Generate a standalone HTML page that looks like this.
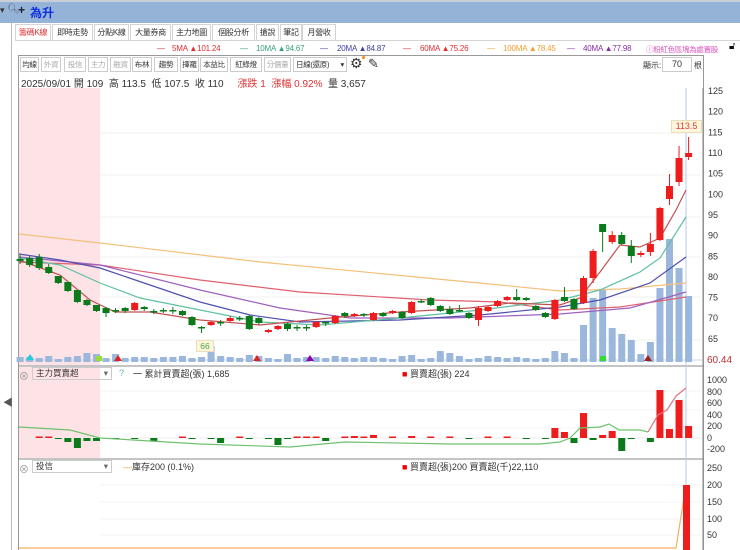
<!DOCTYPE html>
<html><head><meta charset="utf-8">
<style>
*{box-sizing:border-box;margin:0;padding:0}
body{width:740px;height:550px;overflow:hidden;background:#fff;font-family:"Liberation Sans","Noto Sans CJK TC",sans-serif;font-size:9px;color:#333;position:relative}
.a{position:absolute;white-space:nowrap}
.top{left:0;top:0;width:740px;height:23px;background:#95b3d7;border-top:2px solid #c9cfd8}
.tab{position:absolute;top:24px;height:17px;border:1px solid #d4d4d4;border-bottom:none;background:#fff;font-size:8px;line-height:15px;text-align:center;color:#333;white-space:nowrap;overflow:hidden;letter-spacing:-0.3px}
.btn{position:absolute;top:57px;height:15px;border:1px solid #ccc;background:#fff;font-size:7.5px;line-height:13px;text-align:center;color:#333;white-space:nowrap;overflow:hidden;letter-spacing:-0.3px}
.dis{color:#aaa}
.ma{position:absolute;top:44px;font-size:8px;white-space:nowrap;letter-spacing:-0.2px}
</style></head><body>
<div class="a top"></div>
<div class="a" style="left:0;top:5px;font-size:9px;color:#333">▾</div>
<div class="a" style="left:7px;top:4px;font-size:10px;color:#567">🔍︎</div>
<div class="a" style="left:18px;top:3px;font-size:12px;font-weight:bold;color:#223">+</div>
<div class="a" style="left:30px;top:4px;font-size:12px;font-weight:bold;color:#1030e0">為升</div>
<div class="a" style="left:11px;top:23px;width:1px;height:527px;background:#bbb"></div>
<div class="a" style="left:3px;top:394px;font-size:10px;color:#555">◀</div>

<div class="tab" style="left:15px;width:36px;color:#e03030">籌碼K線</div>
<div class="tab" style="left:52px;width:41px">即時走勢</div>
<div class="tab" style="left:94px;width:35px">分點K線</div>
<div class="tab" style="left:130px;width:41px">大量券商</div>
<div class="tab" style="left:172px;width:39px">主力地圖</div>
<div class="tab" style="left:212px;width:43px">個股分析</div>
<div class="tab" style="left:256px;width:23px">搶說</div>
<div class="tab" style="left:280px;width:22px">筆記</div>
<div class="tab" style="left:302px;width:34px">月營收</div>
<div class="a" style="left:15px;top:40px;width:725px;height:1px;background:#d4d4d4"></div>

<div class="ma" style="left:157px;color:#c03030">—</div><div class="ma" style="left:172px;color:#e03030">5MA ▲101.24</div>
<div class="ma" style="left:240px;color:#3aa080">—</div><div class="ma" style="left:256px;color:#3aa080">10MA ▲94.67</div>
<div class="ma" style="left:320px;color:#4040a0">—</div><div class="ma" style="left:337px;color:#4040a0">20MA ▲84.87</div>
<div class="ma" style="left:403px;color:#e03030">—</div><div class="ma" style="left:420px;color:#e03030">60MA ▲75.26</div>
<div class="ma" style="left:487px;color:#f0a030">—</div><div class="ma" style="left:503px;color:#f0a030">100MA ▲78.45</div>
<div class="ma" style="left:567px;color:#8030a0">—</div><div class="ma" style="left:583px;color:#8030a0">40MA ▲77.98</div>
<div class="a" style="left:646px;top:44px;font-size:7.5px;color:#e050c0;letter-spacing:-0.3px">ⓘ粉紅色區塊為處置股</div>
<div class="a" style="left:729px;top:41px;font-size:10px;color:#111">🔓︎</div>

<div class="a" style="left:18px;top:55px;width:686px;height:495px;border:1px solid #999;border-bottom:none"></div>

<div class="btn" style="left:20px;width:19px">均線</div>
<div class="btn dis" style="left:41px;width:20px">外資</div>
<div class="btn dis" style="left:64px;width:22px">投信</div>
<div class="btn dis" style="left:88px;width:20px">主力</div>
<div class="btn dis" style="left:110px;width:21px">融資</div>
<div class="btn" style="left:132px;width:20px">布林</div>
<div class="btn" style="left:154px;width:24px">趨勢</div>
<div class="btn" style="left:180px;width:19px">擇羅</div>
<div class="btn" style="left:200px;width:28px">本益比</div>
<div class="btn" style="left:230px;width:32px">紅綠燈</div>
<div class="btn dis" style="left:264px;width:27px">分價量</div>
<div class="btn" style="left:293px;width:54px;text-align:left;padding-left:2px">日線(還原)<span style="position:absolute;right:2px">▾</span></div>
<div class="a" style="left:350px;top:55px;font-size:14px;color:#333">⚙</div>
<div class="a" style="left:362px;top:56px;width:3px;height:3px;border-radius:2px;background:#f80"></div>
<div class="a" style="left:368px;top:56px;font-size:13px;color:#333">✎</div>
<div class="a" style="left:643px;top:60px;font-size:8px">顯示:</div>
<div class="a" style="left:662px;top:57px;width:30px;height:15px;border:1px solid #ccc;font-size:9px;line-height:13px;text-align:center">70</div>
<div class="a" style="left:694px;top:60px;font-size:8px">根</div>

<svg class="a" style="left:0;top:0" width="740" height="550" id="s"></svg>

<div class="a" style="left:21px;top:75px;font-size:10px;color:#333">2025/09/01 開 109 &nbsp;高 113.5 &nbsp;低 107.5 &nbsp;收 110 &nbsp;&nbsp;&nbsp;&nbsp;<span style="color:#e03030">漲跌 1 &nbsp;漲幅 0.92%</span> &nbsp;量 3,657</div>

<div class="a" style="left:671px;top:120px;width:31px;height:13px;background:#fdf6dc;border:1px solid #eadfb8;color:#e04040;font-size:9px;text-align:center;line-height:11px">113.5</div>
<div class="a" style="left:196px;top:340px;width:18px;height:12px;background:#fdf6dc;border:1px solid #eadfb8;color:#4a4;font-size:8.5px;text-align:center;line-height:10px">66</div>
<div class="a" style="left:707px;top:355px;font-size:10px;color:#c03030">60.44</div>

<div class="a" style="left:19px;top:368px;font-size:10px;color:#999">⊗</div>
<div class="a" style="left:32px;top:367px;width:80px;height:13px;border:1px solid #ccc;font-size:8.5px;line-height:11px;padding-left:3px">主力買賣超<span style="position:absolute;right:3px;color:#666">▾</span></div>
<div class="a" style="left:119px;top:368px;font-size:9px;color:#6ab">?</div>
<div class="a" style="left:133px;top:367px;font-size:9px;color:#333">一 累計買賣超(張) 1,685</div>
<div class="a" style="left:402px;top:367px;font-size:9px;color:#333"><span style="color:#e00">■</span> 買賣超(張) 224</div>

<div class="a" style="left:19px;top:461px;font-size:10px;color:#999">⊗</div>
<div class="a" style="left:32px;top:460px;width:80px;height:13px;border:1px solid #ccc;font-size:8.5px;line-height:11px;padding-left:3px">投信<span style="position:absolute;right:3px;color:#666">▾</span></div>
<div class="a" style="left:123px;top:460px;font-size:9px;color:#333"><span style="color:#f0a030">—</span>庫存200 (0.1%)</div>
<div class="a" style="left:402px;top:460px;font-size:9px;color:#333"><span style="color:#e00">■</span> 買賣超(張)200 買賣超(千)22,110</div>

<script>
var s=document.getElementById('s'),h='';
function r(x,y,w,hh,c){h+='<rect x="'+x+'" y="'+y+'" width="'+w+'" height="'+hh+'" fill="'+c+'"/>';}
function l(x1,y1,x2,y2,c,w){h+='<line x1="'+x1+'" y1="'+y1+'" x2="'+x2+'" y2="'+y2+'" stroke="'+c+'" stroke-width="'+(w||1)+'"/>';}
function pl(p,c,w){h+='<polyline fill="none" stroke="'+c+'" stroke-width="'+(w||1.2)+'" points="'+p+'"/>';}
function t(x,y,txt,c,sz){h+='<text x="'+x+'" y="'+y+'" fill="'+(c||'#333')+'" font-size="'+(sz||9)+'" font-family="Liberation Sans,sans-serif">'+txt+'</text>';}
r(19,88,81,277,'#fde3e6');r(19,367,81,91,'#fde3e6');
[133,175,217,257,297,340].forEach(function(y){l(100,y,702,y,'#f0f0f0')});
[391,410,428].forEach(function(y){l(100,y,702,y,'#f3f3f3')});
[485,502,519,535].forEach(function(y){l(100,y,702,y,'#f3f3f3')});
l(18,366,704,366,'#888');l(18,459,704,459,'#888');l(703,88,703,550,'#888');
l(19,360,702,360,'#c8d4ea');
l(686,88,686,550,'#b8cbe8');
var pr=[125,120,115,110,105,100,95,90,85,80,75,70,65];
pr.forEach(function(p){t(708,153+(110-p)*4.13+3,p,'#333',9)});
[[1000,380],[800,392],[600,403],[400,415],[200,426],[0,438],['-200',449]].forEach(function(a){t(707,a[1]+3,a[0])});
[[250,468],[200,485],[150,502],[100,519],[50,535]].forEach(function(a){t(707,a[1]+3,a[0])});
var C=[[0,259,261,255,264],[1,258,265,256,267],[2,257,268,254,270],[3,267,273,264,274],[4,276,283,276,284],[5,282,291,282,292],[6,290,302,290,303],[7,300,305,299,306],[8,305,311,305,312],[9,308,313,307,317],[10,310,311,308,313],[11,308,311,307,313],[12,310,303,302,311],[13,307,309,306,311],[14,311,312,309,314],[15,310,311,308,313],[16,310,311,307,314],[17,311,315,310,316],[18,317,325,316,326],[19,327,328,326,333],[20,325,322,321,326],[21,322,323,320,326],[22,321,318,316,322],[23,318,319,316,321],[24,316,329,315,330],[25,318,323,317,325],[26,332,330,329,333],[27,329,326,325,330],[28,324,329,323,331],[29,327,328,325,331],[30,327,328,325,331],[31,327,322,321,328],[32,322,323,321,326],[33,323,316,315,324],[34,313,316,312,318],[35,316,314,313,317],[36,314,315,313,317],[37,320,313,312,321],[38,313,316,312,317],[39,313,311,310,314],[40,312,318,311,319],[41,313,302,301,314],[42,301,302,299,303],[43,298,305,297,306],[44,306,311,305,312],[45,309,314,306,315],[46,310,311,305,312],[47,313,318,312,319],[48,320,308,306,326],[49,311,307,306,312],[50,306,301,300,307],[51,300,297,296,301],[52,297,300,289,301],[53,298,300,297,301],[54,306,310,305,311],[55,313,317,312,318],[56,319,300,299,320],[57,297,301,287,302],[58,299,309,298,310],[59,303,278,276,304],[60,278,251,249,283],[61,224,232,224,252],[62,242,235,231,244],[63,235,244,232,245],[64,246,256,240,263],[65,255,253,251,257],[66,252,244,233,256],[67,240,208,207,241],[68,199,186,174,205],[69,182,158,146,186],[70,157,153,137,160]];
function X(i){return 22+(i-0.2)*9.55;}
var V=[5,4,6,3,5,6,9,8,4,8,4,5,5,4,5,5,6,4,5,16,6,5,4,7,6,4,3,8,4,5,5,4,6,5,4,5,5,4,3,6,7,3,4,11,9,6,3,4,6,5,4,5,4,3,4,11,9,4,37,64,72,34,28,22,8,20,74,123,94,66];
V.forEach(function(v,i){var x=X(i+1);r(x-3.5,362-v,7,v,'#9bb8dc')});
r(X(0)-3.5,357,7,5,'#9bb8dc');
pl('19,234 100,243 260,262 500,285 560,291 620,289 686,283','#f5c07a');
pl('19,262 100,265 200,280 300,292 430,300 500,302 560,310 620,307 686,297','#e06070');
pl('19,257 100,265 200,290 280,308 350,318 450,318 560,314 630,308 686,292','#a060c0');
pl('19,254 60,260 100,268 150,285 200,302 250,315 300,322 400,320 480,315 560,307 600,300 650,283 686,257','#5050b0');
pl('19,258 60,265 100,283 140,298 200,310 260,322 320,325 400,318 480,310 560,300 600,290 640,272 660,258 686,217','#60c0a0');
pl('19,260 60,275 90,300 115,312 150,312 200,320 260,325 330,318 400,312 470,308 510,303 560,305 580,298 600,272 620,245 640,247 660,238 676,210 686,190','#c05050');
C.forEach(function(c){var x=X(c[0]),up=c[2]<c[1],col=up?'#ee1c1c':'#0a7a1a';
 l(x,c[3],x,c[4],col);var top=Math.min(c[1],c[2]),hh=Math.max(1.5,Math.abs(c[1]-c[2]));r(x-3.5,top,7,hh,col);});
h+='<polygon points="30,354 34,360 26,360" fill="#2cd"/>';
[[118,'#d22'],[257,'#d22'],[648,'#922']].forEach(function(m){h+='<polygon points="'+m[0]+',355 '+(m[0]+4)+',361 '+(m[0]-4)+',361" fill="'+m[1]+'"/>'});
h+='<polygon points="310,355 314,361 306,361" fill="#80a"/>';
r(96,356,6,5,'#9d3');r(600,356,6,5,'#3d3');
l(19,438,702,438,'#eee');
var B=[[2,0],[3,0],[4,-1],[5,-4],[6,-10],[7,-3],[8,-3],[10,-1],[12,-1],[14,-3],[17,1],[18,-1],[20,-1],[21,-5],[23,1],[24,-1],[26,-1],[27,-7],[28,-1],[29,1],[30,0],[31,1],[32,-3],[34,1],[35,2],[36,0],[37,3],[39,1],[41,2],[43,1],[45,1],[47,-1],[49,1],[51,0],[53,-1],[55,-1],[56,10],[57,6],[58,-5],[59,25],[60,-2],[61,3],[62,7],[63,-13],[64,-1],[66,-4],[67,48],[68,9],[69,38],[70,12]];
B.forEach(function(b){var x=X(b[0]),v=b[1],c=v>=0?'#ee1c1c':'#0a7a1a';if(v>=0)r(x-3.5,438-Math.max(1.5,v),7,Math.max(1.5,v),c);else r(x-3.5,438,7,-v,c);});
pl('19,427 70,430 100,438 200,444 290,447 345,442 450,444 540,444 560,442 570,438 580,428 600,427 609,424 619,430 640,430 648,432','#70c070');
pl('648,432 658,415 667,410 676,396 686,388','#e07080');
pl('19,548 676,548 686,485','#f5b060');
r(683,485,7,65,'#ee1c1c');
s.innerHTML=h;
</script>
</body></html>
